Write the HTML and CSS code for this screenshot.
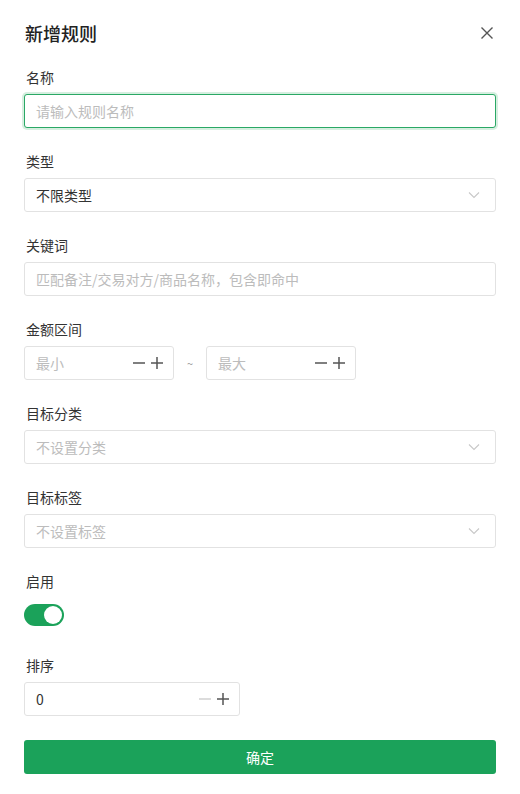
FILE: index.html
```html
<!DOCTYPE html>
<html lang="zh">
<head>
<meta charset="utf-8">
<link rel="stylesheet" href="styles.css">
</head>
<body>
<div class="dialog">
  <div class="header">
    <div class="title">新增规则</div>
    <svg class="close" width="14" height="14" viewBox="0 0 14 14"><path d="M1.5 1.5L12.5 12.5M12.5 1.5L1.5 12.5" stroke="#555" stroke-width="1.4" fill="none"/></svg>
  </div>

  <div class="field">
    <div class="label">名称</div>
    <div class="box focus"><span class="ph">请输入规则名称</span></div>
  </div>

  <div class="field">
    <div class="label">类型</div>
    <div class="box select"><span class="val">不限类型</span><svg class="arrow" width="12" height="8" viewBox="0 0 12 8"><path d="M1 1.5L6 6.5L11 1.5" stroke="#c8c8c8" stroke-width="1.1" fill="none"/></svg></div>
  </div>

  <div class="field">
    <div class="label">关键词</div>
    <div class="box"><span class="ph">匹配备注/交易对方/商品名称，包含即命中</span></div>
  </div>

  <div class="field">
    <div class="label">金额区间</div>
    <div class="range">
      <div class="box num"><span class="ph">最小</span>
        <span class="ctrls"><svg width="12" height="12" viewBox="0 0 12 12"><path d="M0 6H12" stroke="#555" stroke-width="1.5"/></svg><svg width="12" height="12" viewBox="0 0 12 12"><path d="M0 6H12M6 0V12" stroke="#555" stroke-width="1.5"/></svg></span>
      </div>
      <span class="tilde">~</span>
      <div class="box num"><span class="ph">最大</span>
        <span class="ctrls"><svg width="12" height="12" viewBox="0 0 12 12"><path d="M0 6H12" stroke="#555" stroke-width="1.5"/></svg><svg width="12" height="12" viewBox="0 0 12 12"><path d="M0 6H12M6 0V12" stroke="#555" stroke-width="1.5"/></svg></span>
      </div>
    </div>
  </div>

  <div class="field">
    <div class="label">目标分类</div>
    <div class="box select"><span class="ph">不设置分类</span><svg class="arrow" width="12" height="8" viewBox="0 0 12 8"><path d="M1 1.5L6 6.5L11 1.5" stroke="#c8c8c8" stroke-width="1.1" fill="none"/></svg></div>
  </div>

  <div class="field">
    <div class="label">目标标签</div>
    <div class="box select"><span class="ph">不设置标签</span><svg class="arrow" width="12" height="8" viewBox="0 0 12 8"><path d="M1 1.5L6 6.5L11 1.5" stroke="#c8c8c8" stroke-width="1.1" fill="none"/></svg></div>
  </div>

  <div class="field">
    <div class="label">启用</div>
    <div class="switch-row"><span class="switch"><span class="knob"></span></span></div>
  </div>

  <div class="field">
    <div class="label">排序</div>
    <div class="box num short"><span class="val">0</span>
      <span class="ctrls"><svg width="12" height="12" viewBox="0 0 12 12"><path d="M0 6H12" stroke="#d0d0d0" stroke-width="1.5"/></svg><svg width="12" height="12" viewBox="0 0 12 12"><path d="M0 6H12M6 0V12" stroke="#555" stroke-width="1.5"/></svg></span>
    </div>
  </div>

  <button class="submit">确定</button>
</div>
</body>
</html>
```

FILE: styles.css
```css
html, body {
  margin: 0;
  padding: 0;
  background: #ffffff;
}
body {
  font-family: "Noto Sans CJK SC", "Noto Sans", sans-serif;
  color: #333;
}
.dialog {
  width: 520px;
  height: 794px;
  box-sizing: border-box;
  padding: 20px 24px 20px 24px;
  background: #fff;
  border-radius: 6px;
  display: flex;
  flex-direction: column;
}
.header {
  display: flex;
  align-items: center;
  justify-content: space-between;
  height: 26px;
  margin-bottom: 20px;
}
.title {
  font-size: 18px;
  font-weight: 500;
  color: #222;
  line-height: 26px;
  padding-left: 1px;
}
.close {
  margin-right: 2px;
}
.field {
  margin-bottom: 22px;
}
.label {
  font-size: 14px;
  line-height: 22px;
  height: 22px;
  color: #333;
  margin-bottom: 6px;
  padding-left: 2px;
}
.box {
  height: 34px;
  box-sizing: border-box;
  border: 1px solid #e2e2e2;
  border-radius: 3px;
  padding: 0 11px;
  display: flex;
  align-items: center;
  font-size: 14px;
  background: #fff;
}
.box.focus {
  border-color: #2aa865;
  box-shadow: 0 0 0 2px #d6efe0;
}
.ph {
  color: #bcbcbc;
}
.val {
  color: #333;
}
.select {
  justify-content: space-between;
}
.arrow {
  margin-right: 4px;
}
.range {
  display: flex;
  align-items: center;
}
.num {
  width: 150px;
  justify-content: space-between;
  padding-right: 10px;
}
.num.short {
  width: 216px;
}
.ctrls {
  display: flex;
  align-items: center;
  gap: 6px;
}
.ctrls svg {
  display: block;
}
.tilde {
  width: 32px;
  text-align: center;
  color: #999;
  font-size: 11px;
}
.switch-row {
  height: 34px;
  display: flex;
  align-items: center;
}
.switch {
  width: 40px;
  height: 22px;
  border-radius: 11px;
  background: #1ba25a;
  position: relative;
  display: block;
}
.knob {
  position: absolute;
  right: 2px;
  top: 2px;
  width: 18px;
  height: 18px;
  border-radius: 50%;
  background: #fff;
}
.submit {
  margin-top: 2px;
  height: 34px;
  border: none;
  border-radius: 3px;
  background: #1ba25a;
  color: #fff;
  font-family: "Noto Sans CJK SC", "Noto Sans", sans-serif;
  font-size: 14px;
  width: 100%;
}
```
